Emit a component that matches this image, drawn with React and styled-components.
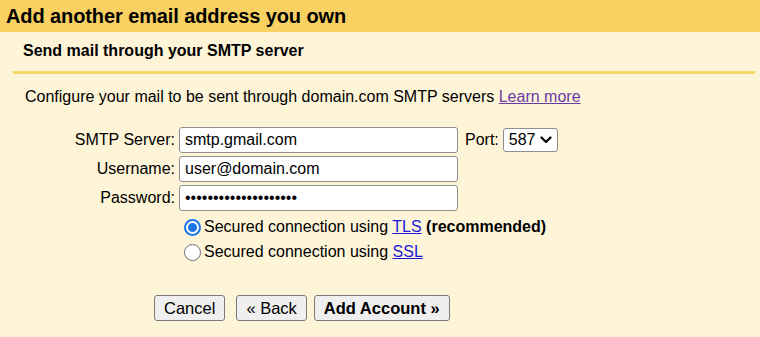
import React from "react";
import styled, { createGlobalStyle } from "styled-components";

const Global = createGlobalStyle`
  html, body { margin: 0; padding: 0; background: #fef4d8; }
  body { font-family: "Liberation Sans", Arial, sans-serif; color: #000; }
`;

const Page = styled.div`
  width: 760px;
  height: 337px;
  background: #fef4d8;
  overflow: hidden;
`;

const TitleBar = styled.div`
  height: 32px;
  background: #f9d162;
  display: flex;
  align-items: center;
  padding-left: 6px;
  font-size: 20px;
  font-weight: bold;
  letter-spacing: -0.1px;
`;

const SubHeader = styled.div`
  margin: 0 5px 0 13px;
  padding: 10px 0 0 10px;
  height: 29px;
  border-bottom: 3px solid #f7d569;
  font-size: 16px;
  font-weight: bold;
`;

const Description = styled.p`
  margin: 14px 0 0 25px;
  font-size: 16px;
`;

const Link = styled.a`
  color: ${(p) => (p.$visited ? "#6a3aa5" : "#1a1ad8")};
  text-decoration: underline;
  cursor: pointer;
`;

const Form = styled.div`
  margin: 21px 0 0 25px;
  display: grid;
  grid-template-columns: 150px 279px auto;
  column-gap: 4px;
  row-gap: 3px;
  align-items: center;
`;

const Label = styled.label`
  text-align: right;
  font-size: 16px;
`;

const TextInput = styled.input`
  box-sizing: border-box;
  width: 279px;
  height: 26px;
  border: 1px solid #8e8e8e;
  border-radius: 3px;
  background: #fff;
  padding: 0 5px;
  font-family: "Liberation Sans", Arial, sans-serif;
  font-size: 16px;
  color: #000;
  outline: none;
`;

const PortGroup = styled.div`
  display: flex;
  align-items: center;
  gap: 4px;
  margin-left: 3px;
  font-size: 16px;
`;

const Select = styled.div`
  box-sizing: border-box;
  width: 55px;
  height: 24px;
  border: 1px solid #8e8e8e;
  border-radius: 3px;
  background: #fff;
  display: flex;
  align-items: center;
  padding-left: 5px;
  gap: 4px;
  font-size: 16px;
`;

const Radios = styled.div`
  margin: 7px 0 0 184px;
  display: flex;
  flex-direction: column;
  gap: 7px;
`;

const RadioRow = styled.label`
  display: flex;
  align-items: center;
  gap: 3px;
  font-size: 16px;
`;

const RadioDot = styled.span`
  box-sizing: border-box;
  width: 17px;
  height: 17px;
  border-radius: 50%;
  border: ${(p) => (p.$checked ? "2px solid #1b74e8" : "1px solid #6b6b6b")};
  background: #fff;
  display: flex;
  align-items: center;
  justify-content: center;
  &::after {
    content: "";
    width: 9px;
    height: 9px;
    border-radius: 50%;
    background: ${(p) => (p.$checked ? "#1b74e8" : "transparent")};
  }
`;

const Buttons = styled.div`
  margin: 34px 0 0 154px;
  display: flex;
  gap: 7px;
`;

const Button = styled.button`
  box-sizing: border-box;
  height: 26px;
  padding: 0 9px;
  margin-right: ${(p) => p.$mr || 0}px;
  border: 1px solid #7a7a7a;
  border-radius: 3px;
  background: #efefef;
  font-family: "Liberation Sans", Arial, sans-serif;
  font-size: 16.5px;
  font-weight: ${(p) => (p.$bold ? "bold" : "normal")};
  color: #000;
`;

export default function App() {
  return (
    <Page>
      <Global />
      <TitleBar>Add another email address you own</TitleBar>
      <SubHeader>Send mail through your SMTP server</SubHeader>
      <Description>
        Configure your mail to be sent through domain.com SMTP servers{" "}
        <Link $visited>Learn more</Link>
      </Description>
      <Form>
        <Label>SMTP Server:</Label>
        <TextInput defaultValue="smtp.gmail.com" />
        <PortGroup>
          Port:
          <Select>
            587
            <svg width="12" height="8" viewBox="0 0 12 8">
              <path d="M1.5 1.5 L6 6 L10.5 1.5" fill="none" stroke="#000" strokeWidth="2.2" strokeLinecap="round" strokeLinejoin="round" />
            </svg>
          </Select>
        </PortGroup>
        <Label>Username:</Label>
        <TextInput defaultValue="user@domain.com" />
        <span />
        <Label>Password:</Label>
        <TextInput type="password" defaultValue="aaaaaaaaaaaaaaaaaaaa" />
        <span />
      </Form>
      <Radios>
        <RadioRow>
          <RadioDot $checked />
          <span>
            Secured connection using <Link>TLS</Link> <b>(recommended)</b>
          </span>
        </RadioRow>
        <RadioRow>
          <RadioDot />
          <span>
            Secured connection using <Link>SSL</Link>
          </span>
        </RadioRow>
      </Radios>
      <Buttons>
        <Button $mr={4}>Cancel</Button>
        <Button>« Back</Button>
        <Button $bold>Add Account »</Button>
      </Buttons>
    </Page>
  );
}
